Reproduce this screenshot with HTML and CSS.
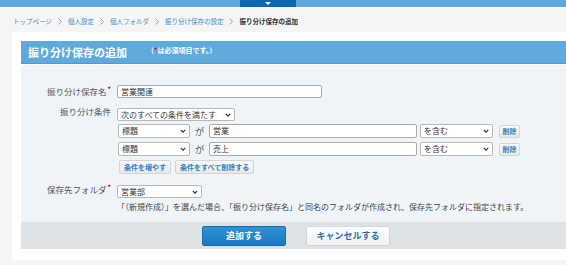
FILE: index.html
```html
<!DOCTYPE html>
<html lang="ja">
<head>
  <meta charset="UTF-8" />
  <title>振り分け保存の追加</title>
  <link rel="stylesheet" href="styles.css">
</head>
<body>

  <!-- Top bar -->
  <div class="topbar">
    <div class="topbar-tab"><span class="tri"></span></div>
  </div>

  <!-- Breadcrumb -->
  <div class="crumbs">
    <a href="#">トップページ</a><svg class="sep" viewBox="0 0 4 7"><path d="M0.5 0.5l3 3-3 3" /></svg>
    <a href="#">個人設定</a><svg class="sep" viewBox="0 0 4 7"><path d="M0.5 0.5l3 3-3 3" /></svg>
    <a href="#">個人フォルダ</a><svg class="sep" viewBox="0 0 4 7"><path d="M0.5 0.5l3 3-3 3" /></svg>
    <a href="#">振り分け保存の設定</a><svg class="sep" viewBox="0 0 4 7"><path d="M0.5 0.5l3 3-3 3" /></svg>
    <span class="current">振り分け保存の追加</span>
  </div>

  <div class="card">
    <div class="panel-head">
      <h2>振り分け保存の追加</h2>
      <span class="note">（<i class="req">*</i>は必須項目です。）</span>
    </div>

    <div class="panel-body">
      <div class="row row-name">
        <label class="lbl">振り分け保存名<i class="req">*</i></label>
        <div class="field">
          <div class="input w-name">営業関連</div>
        </div>
      </div>

      <div class="row row-cond">
        <label class="lbl">振り分け条件</label>
        <div class="field">
          <div class="select w-all">次のすべての条件を満たす<svg viewBox="0 0 8 5"><path d="M1 1l3 3 3-3" /></svg></div>
          <div class="cond">
            <div class="select w-item">標題<svg viewBox="0 0 8 5"><path d="M1 1l3 3 3-3" /></svg></div>
            <span class="ga">が</span>
            <div class="input w-val">営業</div>
            <div class="select w-op">を含む<svg viewBox="0 0 8 5"><path d="M1 1l3 3 3-3" /></svg></div>
            <button class="btn-s btn-del">削除</button>
          </div>
          <div class="cond">
            <div class="select w-item">標題<svg viewBox="0 0 8 5"><path d="M1 1l3 3 3-3" /></svg></div>
            <span class="ga">が</span>
            <div class="input w-val">売上</div>
            <div class="select w-op">を含む<svg viewBox="0 0 8 5"><path d="M1 1l3 3 3-3" /></svg></div>
            <button class="btn-s btn-del">削除</button>
          </div>
          <div class="cond-btns">
            <button class="btn-s">条件を増やす</button>
            <button class="btn-s">条件をすべて削除する</button>
          </div>
        </div>
      </div>

      <div class="row row-folder">
        <label class="lbl">保存先フォルダ<i class="req">*</i></label>
        <div class="field">
          <div class="select w-folder">営業部<svg viewBox="0 0 8 5"><path d="M1 1l3 3 3-3" /></svg></div>
          <p class="hint">「（新規作成）」を選んだ場合、「振り分け保存名」と同名のフォルダが作成され、保存先フォルダに指定されます。</p>
        </div>
      </div>
    </div>

    <div class="panel-foot">
      <button class="btn-primary">追加する</button>
      <button class="btn-cancel">キャンセルする</button>
    </div>
  </div>

</body>
</html>
```

FILE: styles.css
```css
body {
  margin: 0;
  background: #f5f5f5;
  font-family: "Noto Sans CJK JP", "Noto Sans", sans-serif;
  color: #333;
  overflow: hidden;
}

/* top bar */
.topbar {
  height: 7px;
  background: #5eaadc;
  display: flex;
}

.topbar-tab {
  margin-left: 240px;
  width: 56px;
  background: #0b69ad;
  display: flex;
  justify-content: center;
}

.tri {
  margin-top: 2px;
  width: 0;
  height: 0;
  border-left: 3px solid transparent;
  border-right: 3px solid transparent;
  border-top: 3px solid #fff;
}

/* breadcrumb */
.crumbs {
  padding: 3px 0 0 13px;
  height: 22px;
  font-size: 6.5px;
  line-height: 10px;
  display: flex;
  align-items: center;
}

.crumbs a {
  color: #3f8dcb;
  text-decoration: none;
}

.crumbs .sep {
  width: 4px;
  height: 7px;
  margin: 0 6px 0 6px;
  fill: none;
  stroke: #888;
  stroke-width: 0.8;
}

.crumbs .current {
  color: #333;
  font-weight: bold;
}

/* card */
.card {
  margin-left: 12px;
  padding: 9px 0 11px 9px;
  background: #fff;
  border-radius: 3px 0 0 3px;
}

.panel-head {
  height: 22px;
  background: #5eaadc;
  border-bottom: 1px solid #4f9bd0;
  display: flex;
  align-items: center;
  padding-left: 7px;
  color: #fff;
}

.panel-head h2 {
  margin: 0;
  font-size: 11px;
  font-weight: bold;
}

.panel-head .note {
  margin-left: 20px;
  margin-top: -5px;
  font-size: 7px;
  font-weight: bold;
}

.req {
  color: #e0002a;
  font-style: normal;
  font-weight: bold;
}

.panel-body {
  margin-top: 1px;
  background: #eff4f8;
  padding: 20px 0 10px;
}

.row {
  display: flex;
}

.lbl {
  width: 90px;
  flex: none;
  text-align: right;
  font-size: 8.5px;
  color: #555;
  line-height: 13px;
}

.lbl .req {
  font-size: 7px;
  vertical-align: top;
  margin-left: 1px;
  line-height: 9px;
}

.field {
  margin-left: 6px;
  display: flex;
  flex-direction: column;
}

.row-cond {
  margin-top: 10px;
}

.row-cond .lbl {
  margin-top: -3px;
}

.row-folder {
  margin-top: 11px;
}

.row-folder .lbl {
  margin-top: -2px;
}

.input,
.select {
  box-sizing: border-box;
  height: 14px;
  background: #fff;
  border: 1px solid #aaa;
  border-radius: 2px;
  font-size: 8px;
  line-height: 12px;
  padding: 0 3px;
  color: #333;
}

.select {
  display: flex;
  justify-content: space-between;
  align-items: center;
  border-color: #b8b8b8;
}

.select svg {
  width: 6px;
  height: 4px;
  fill: none;
  stroke: #333;
  stroke-width: 1.6;
}

.w-name {
  width: 205px;
  height: 13px;
}

.w-all {
  width: 118px;
  height: 13px;
}

.w-item {
  width: 72px;
  margin-left: 1px;
}

.w-val {
  width: 208px;
}

.w-op {
  width: 73px;
  margin-left: 3px;
}

.w-folder {
  width: 85px;
  height: 13px;
}

.cond {
  display: flex;
  align-items: center;
  margin-top: 2px;
  height: 16px;
}

.cond + .cond {
  margin-top: 2px;
}

.ga {
  font-size: 9.5px;
  color: #555;
  width: 19px;
  text-align: center;
}

.btn-s {
  box-sizing: border-box;
  height: 13px;
  padding: 0 3px;
  background: linear-gradient(#fafafa, #e8e8e8);
  border: 1px solid #d4d4d4;
  border-radius: 2px;
  color: #2f7fbf;
  font-family: inherit;
  font-size: 7px;
  font-weight: bold;
  line-height: 11px;
  cursor: pointer;
}

.btn-del {
  margin-left: 6px;
  width: 21px;
  padding: 0;
}

.cond-btns {
  display: flex;
  gap: 4px;
  margin-top: 3px;
  margin-left: 2px;
}

.cond-btns .btn-s {
  height: 14px;
  padding: 0 4px;
}

.hint {
  margin: 3px 0 0;
  font-size: 8px;
  line-height: 11px;
  color: #444;
  white-space: nowrap;
}

/* footer */
.panel-foot {
  height: 27px;
  background: #dde2e6;
  display: flex;
  align-items: center;
  padding-left: 181px;
  gap: 20px;
}

.btn-primary,
.btn-cancel {
  box-sizing: border-box;
  width: 84px;
  height: 20px;
  border-radius: 2px;
  font-family: inherit;
  font-size: 9px;
  font-weight: bold;
  cursor: pointer;
}

.btn-primary {
  background: linear-gradient(#2e93d6, #1a78c2);
  border: 1px solid #166bb0;
  color: #fff;
}

.btn-cancel {
  background: linear-gradient(#fff, #f1f1f1);
  border: 1px solid #d2d6da;
  color: #2f6fa8;
}
```
